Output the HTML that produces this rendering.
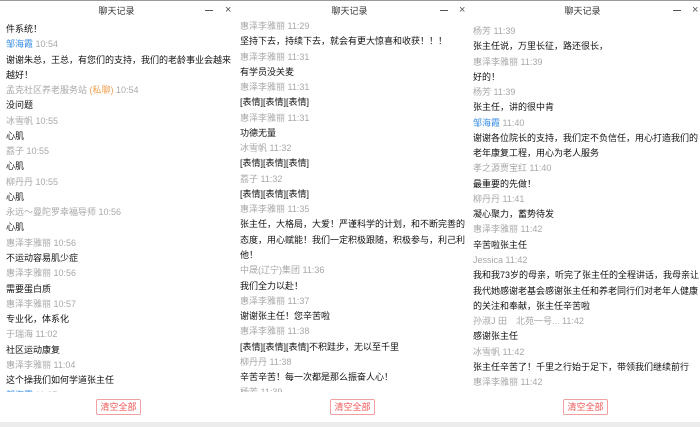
<!DOCTYPE html>
<html><head><meta charset="utf-8"><style>
*{margin:0;padding:0;box-sizing:border-box}
body{width:700px;height:427px;background:#fff;position:relative;overflow:hidden;font-family:"Liberation Sans","Noto Sans CJK SC",sans-serif}
.top{position:absolute;left:0;top:0;width:700px;height:1px;background:#9a9a9a}
.bot{position:absolute;left:0;top:422px;width:700px;height:5px;background:#ececec}
.p{position:absolute;top:1px;width:233px;height:421px}
.t{position:absolute;top:4px;left:0;width:100%;text-align:center;font-size:9px;color:#333;line-height:12px}
.mn{position:absolute;top:9px;width:8px;height:1px;background:#555}
.cl{position:absolute;top:3px;font-size:11px;color:#555;line-height:12px}
.c{position:absolute;top:20px;height:371px;overflow:hidden;width:226px}
.c div{font-size:9px;line-height:15.27px;height:15.27px;white-space:nowrap;color:#111}
.c div.s{height:0;line-height:0}
.c .n{color:#a8a8a8}
.c .b{color:#3a8ee6}
.o{color:#f0a050}
.btn{position:absolute;top:398px;width:45px;height:16px;border:1px solid #f0a0a0;border-radius:2px;color:#e55;font-size:9px;text-align:center;line-height:14px}
</style></head><body>
<div class="top"></div>
<div class="p" style="left:0">
<div class="t">聊天记录</div><div class="mn" style="left:205px"></div><div class="cl" style="left:225px">×</div>
<div class="c" style="left:6px"><div class="s" style="margin-top:1px"></div>
<div>件系统！</div>
<div class="b">邹海霞 <span class="n">10:54</span></div>
<div>谢谢朱总，王总，有您们的支持，我们的老龄事业会越来</div>
<div>越好！</div>
<div class="n">孟克社区养老服务站 <span class="o">(私聊)</span> 10:54</div>
<div>没问题</div>
<div class="n">冰雪帆 10:55</div>
<div>心肌</div>
<div class="n">荔子 10:55</div>
<div>心肌</div>
<div class="n">柳丹丹 10:55</div>
<div>心肌</div>
<div class="n">永远～曼陀罗幸福导师 10:56</div>
<div>心肌</div>
<div class="n">惠泽李雅丽 10:56</div>
<div>不运动容易肌少症</div>
<div class="n">惠泽李雅丽 10:56</div>
<div>需要蛋白质</div>
<div class="n">惠泽李雅丽 10:57</div>
<div>专业化，体系化</div>
<div class="n">于瑞海 11:02</div>
<div>社区运动康复</div>
<div class="n">惠泽李雅丽 11:04</div>
<div>这个操我们如何学道张主任</div>
<div class="b">邹海霞 <span class="n">11:05</span></div>
</div>
<div class="btn" style="left:96px">清空全部</div>
</div>
<div class="p" style="left:233px">
<div class="t">聊天记录</div><div class="mn" style="left:207px"></div><div class="cl" style="left:226px">×</div>
<div class="c" style="left:7px"><div class="s" style="margin-top:-2px"></div>
<div class="n">惠泽李雅丽 11:29</div>
<div>坚持下去，持续下去，就会有更大惊喜和收获！！！</div>
<div class="n">惠泽李雅丽 11:31</div>
<div>有学员没关麦</div>
<div class="n">惠泽李雅丽 11:31</div>
<div>[表情][表情][表情]</div>
<div class="n">惠泽李雅丽 11:31</div>
<div>功德无量</div>
<div class="n">冰雪帆 11:32</div>
<div>[表情][表情][表情]</div>
<div class="n">荔子 11:32</div>
<div>[表情][表情][表情]</div>
<div class="n">惠泽李雅丽 11:35</div>
<div>张主任，大格局，大爱！严谨科学的计划，和不断完善的</div>
<div>态度，用心赋能！我们一定积极跟随，积极参与，利己利</div>
<div>他！</div>
<div class="n">中晟(辽宁)集团 11:36</div>
<div>我们全力以赴！</div>
<div class="n">惠泽李雅丽 11:37</div>
<div>谢谢张主任！您辛苦啦</div>
<div class="n">惠泽李雅丽 11:38</div>
<div>[表情][表情][表情]不积跬步，无以至千里</div>
<div class="n">柳丹丹 11:38</div>
<div>辛苦辛苦！每一次都是那么振奋人心！</div>
<div class="n">杨芳 11:39</div>
</div>
<div class="btn" style="left:97px">清空全部</div>
</div>
<div class="p" style="left:466px">
<div class="t">聊天记录</div><div class="mn" style="left:207px"></div><div class="cl" style="left:226px">×</div>
<div class="c" style="left:7px"><div class="s" style="margin-top:3px"></div>
<div class="n">杨芳 11:39</div>
<div>张主任说，万里长征，路还很长，</div>
<div class="n">惠泽李雅丽 11:39</div>
<div>好的！</div>
<div class="n">杨芳 11:39</div>
<div>张主任，讲的很中肯</div>
<div class="b">邹海霞 <span class="n">11:40</span></div>
<div>谢谢各位院长的支持，我们定不负信任，用心打造我们的</div>
<div>老年康复工程，用心为老人服务</div>
<div class="n">孝之源贾宝红 11:40</div>
<div>最重要的先做！</div>
<div class="n">柳丹丹 11:41</div>
<div>凝心聚力，蓄势待发</div>
<div class="n">惠泽李雅丽 11:42</div>
<div>辛苦啦张主任</div>
<div class="n">Jessica 11:42</div>
<div>我和我73岁的母亲，听完了张主任的全程讲话，我母亲让</div>
<div>我代她感谢老基会感谢张主任和养老同行们对老年人健康</div>
<div>的关注和奉献，张主任辛苦啦</div>
<div class="n">孙淑J 田　北苑一号... 11:42</div>
<div>感谢张主任</div>
<div class="n">冰雪帆 11:42</div>
<div>张主任辛苦了！千里之行始于足下，带领我们继续前行</div>
<div class="n">惠泽李雅丽 11:42</div>
<div>感谢</div>
</div>
<div class="btn" style="left:97px">清空全部</div>
</div>
<div class="bot"></div>
</body></html>
